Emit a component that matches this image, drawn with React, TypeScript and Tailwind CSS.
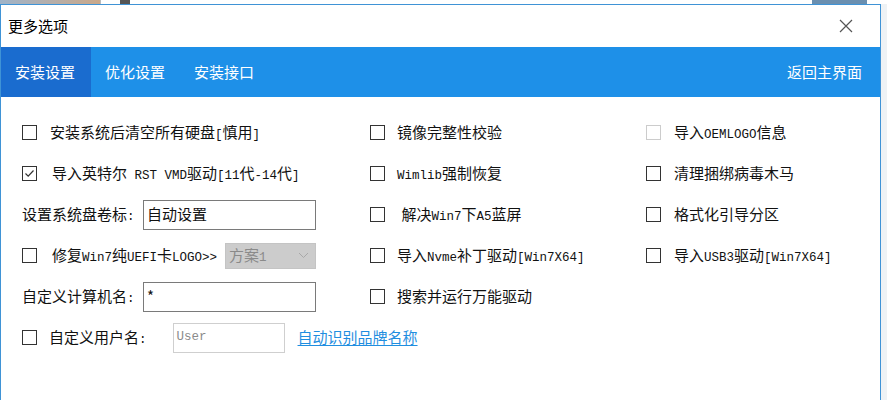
import type { ReactNode } from 'react';

const cjk = 'font-["Microsoft_YaHei","Noto_Sans_CJK_SC",sans-serif]';

// ASCII runs are drawn in a narrow mono face, like the SimSun half-width glyphs
function Mixed({ text }: { text: string }) {
  const parts = text.match(/[\x20-\x7e]+|[^\x20-\x7e]+/g) ?? [];
  return (
    <>
      {parts.map((p, i) =>
        /^[\x20-\x7e]+$/.test(p) ? (
          <span
            key={i}
            className='whitespace-pre font-["Liberation_Mono",monospace] text-[12.5px]'
          >
            {p}
          </span>
        ) : (
          <span key={i}>{p}</span>
        ),
      )}
    </>
  );
}

function Box({ checked, disabled }: { checked?: boolean; disabled?: boolean }) {
  return (
    <span
      className={
        'flex h-[15px] w-[15px] shrink-0 items-center justify-center border bg-white ' +
        (disabled ? 'border-[#cccccc]' : 'border-[#333333]')
      }
    >
      {checked ? (
        <svg width="11" height="11" viewBox="0 0 11 11">
          <path d="M1.5 5.5 L4.2 8.2 L9.5 2.5" fill="none" stroke="#333" strokeWidth="1.2" />
        </svg>
      ) : null}
    </span>
  );
}

function Check({
  label,
  checked,
  disabled,
  gap = 'gap-[13px]',
}: {
  label: string;
  checked?: boolean;
  disabled?: boolean;
  gap?: string;
}) {
  return (
    <div className={'flex items-center ' + gap}>
      <Box checked={checked} disabled={disabled} />
      <span className="whitespace-nowrap text-[15px] text-[#111]">
        <Mixed text={label} />
      </span>
    </div>
  );
}

function Field({ label, value }: { label: string; value: string }) {
  return (
    <div className="flex items-center">
      <span className="w-[121px] whitespace-nowrap text-[15px] text-[#111]">
        <Mixed text={label} />
      </span>
      <div className="flex h-[30px] w-[173px] items-center border border-[#7a7a7a] bg-white px-[3px] text-[15px] text-[#111]">
        {value}
      </div>
    </div>
  );
}

function Row({ children }: { children: ReactNode }) {
  return <div className="flex h-[41px] items-center">{children}</div>;
}

export default function App() {
  return (
    <div className={'relative h-[400px] w-[887px] overflow-hidden bg-[#eef2f5] ' + cjk}>
      {/* strip of the window behind */}
      <div className="flex h-[4px] bg-white">
        <div className="w-[100px] bg-gradient-to-r from-[#9fb3c8] to-[#c9a88a]" />
        <div className="w-[20px] border-l border-[#bbb]" />
        <div className="w-[10px] bg-[#555]" />
        <div className="flex-1" />
        <div className="mr-[20px] w-[55px] bg-[#6a8fb0]" />
      </div>

      <div className="flex h-[396px] w-[881px] flex-col border border-b-0 border-[#3f93d6] bg-white">
        {/* title bar */}
        <div className="flex h-[42px] shrink-0 items-center justify-between pl-[7px] pr-[27px]">
          <span className="text-[15px] text-black">更多选项</span>
          <svg width="14" height="14" viewBox="0 0 14 14">
            <path d="M1 1 L13 13 M13 1 L1 13" stroke="#555" strokeWidth="1.2" />
          </svg>
        </div>

        {/* tab bar */}
        <div className="flex h-[50px] shrink-0 items-stretch bg-[#1e90e8] text-[15px] text-white">
          <div className="flex w-[90px] items-center justify-center bg-[#1a6ccf] pr-[2px]">安装设置</div>
          <div className="flex items-center pl-[14px]">优化设置</div>
          <div className="flex items-center pl-[29px]">安装接口</div>
          <div className="ml-auto flex items-center pr-[18px]">返回主界面</div>
        </div>

        {/* options */}
        <div className="flex flex-col pl-[21px] pt-[15px]">
          <div className="grid grid-cols-[348px_276px_1fr]">
            <Row>
              <Check label="安装系统后清空所有硬盘[慎用]" />
            </Row>
            <Row>
              <Check label="镜像完整性校验" gap="gap-[12px]" />
            </Row>
            <Row>
              <Check label="导入OEMLOGO信息" disabled />
            </Row>

            <Row>
              <Check label="导入英特尔 RST VMD驱动[11代-14代]" checked gap="gap-[15px]" />
            </Row>
            <Row>
              <Check label="Wimlib强制恢复" gap="gap-[12px]" />
            </Row>
            <Row>
              <Check label="清理捆绑病毒木马" />
            </Row>

            <Row>
              <Field label="设置系统盘卷标:" value="自动设置" />
            </Row>
            <Row>
              <Check label=" 解决Win7下A5蓝屏" gap="gap-[9px]" />
            </Row>
            <Row>
              <Check label="格式化引导分区" />
            </Row>

            <Row>
              <div className="flex items-center gap-[15px]">
                <Box />
                <span className="whitespace-nowrap text-[15px] text-[#111]">
                  <Mixed text="修复Win7纯UEFI卡LOGO>>" />
                </span>
              </div>
              <div className="ml-[8px] flex h-[26px] w-[91px] items-center justify-between border border-[#c4c4c4] bg-[#cccccc] pl-[3px] pr-[6px] text-[15px] text-[#8a8a8a]">
                <span>
                  <Mixed text="方案1" />
                </span>
                <svg width="11" height="7" viewBox="0 0 11 7">
                  <path d="M1 1 L5.5 5.5 L10 1" fill="none" stroke="#a8a8a8" strokeWidth="1" />
                </svg>
              </div>
            </Row>
            <Row>
              <Check label="导入Nvme补丁驱动[Win7X64]" gap="gap-[12px]" />
            </Row>
            <Row>
              <Check label="导入USB3驱动[Win7X64]" />
            </Row>

            <Row>
              <Field label="自定义计算机名:" value="*" />
            </Row>
            <Row>
              <Check label="搜索并运行万能驱动" gap="gap-[12px]" />
            </Row>
            <div />
          </div>

          <Row>
            <Check label="自定义用户名:" gap="gap-[12px]" />
            <div className="ml-[26px] flex h-[30px] w-[112px] items-center border border-[#cfcfcf] bg-white px-[3px] text-[#8a8a8a]">
              <span className='font-["Liberation_Mono",monospace] text-[12.5px]'>User</span>
            </div>
            <span className="ml-[13px] cursor-pointer text-[15px] text-[#1f8ee0] underline underline-offset-2">
              自动识别品牌名称
            </span>
          </Row>
        </div>
      </div>
    </div>
  );
}
